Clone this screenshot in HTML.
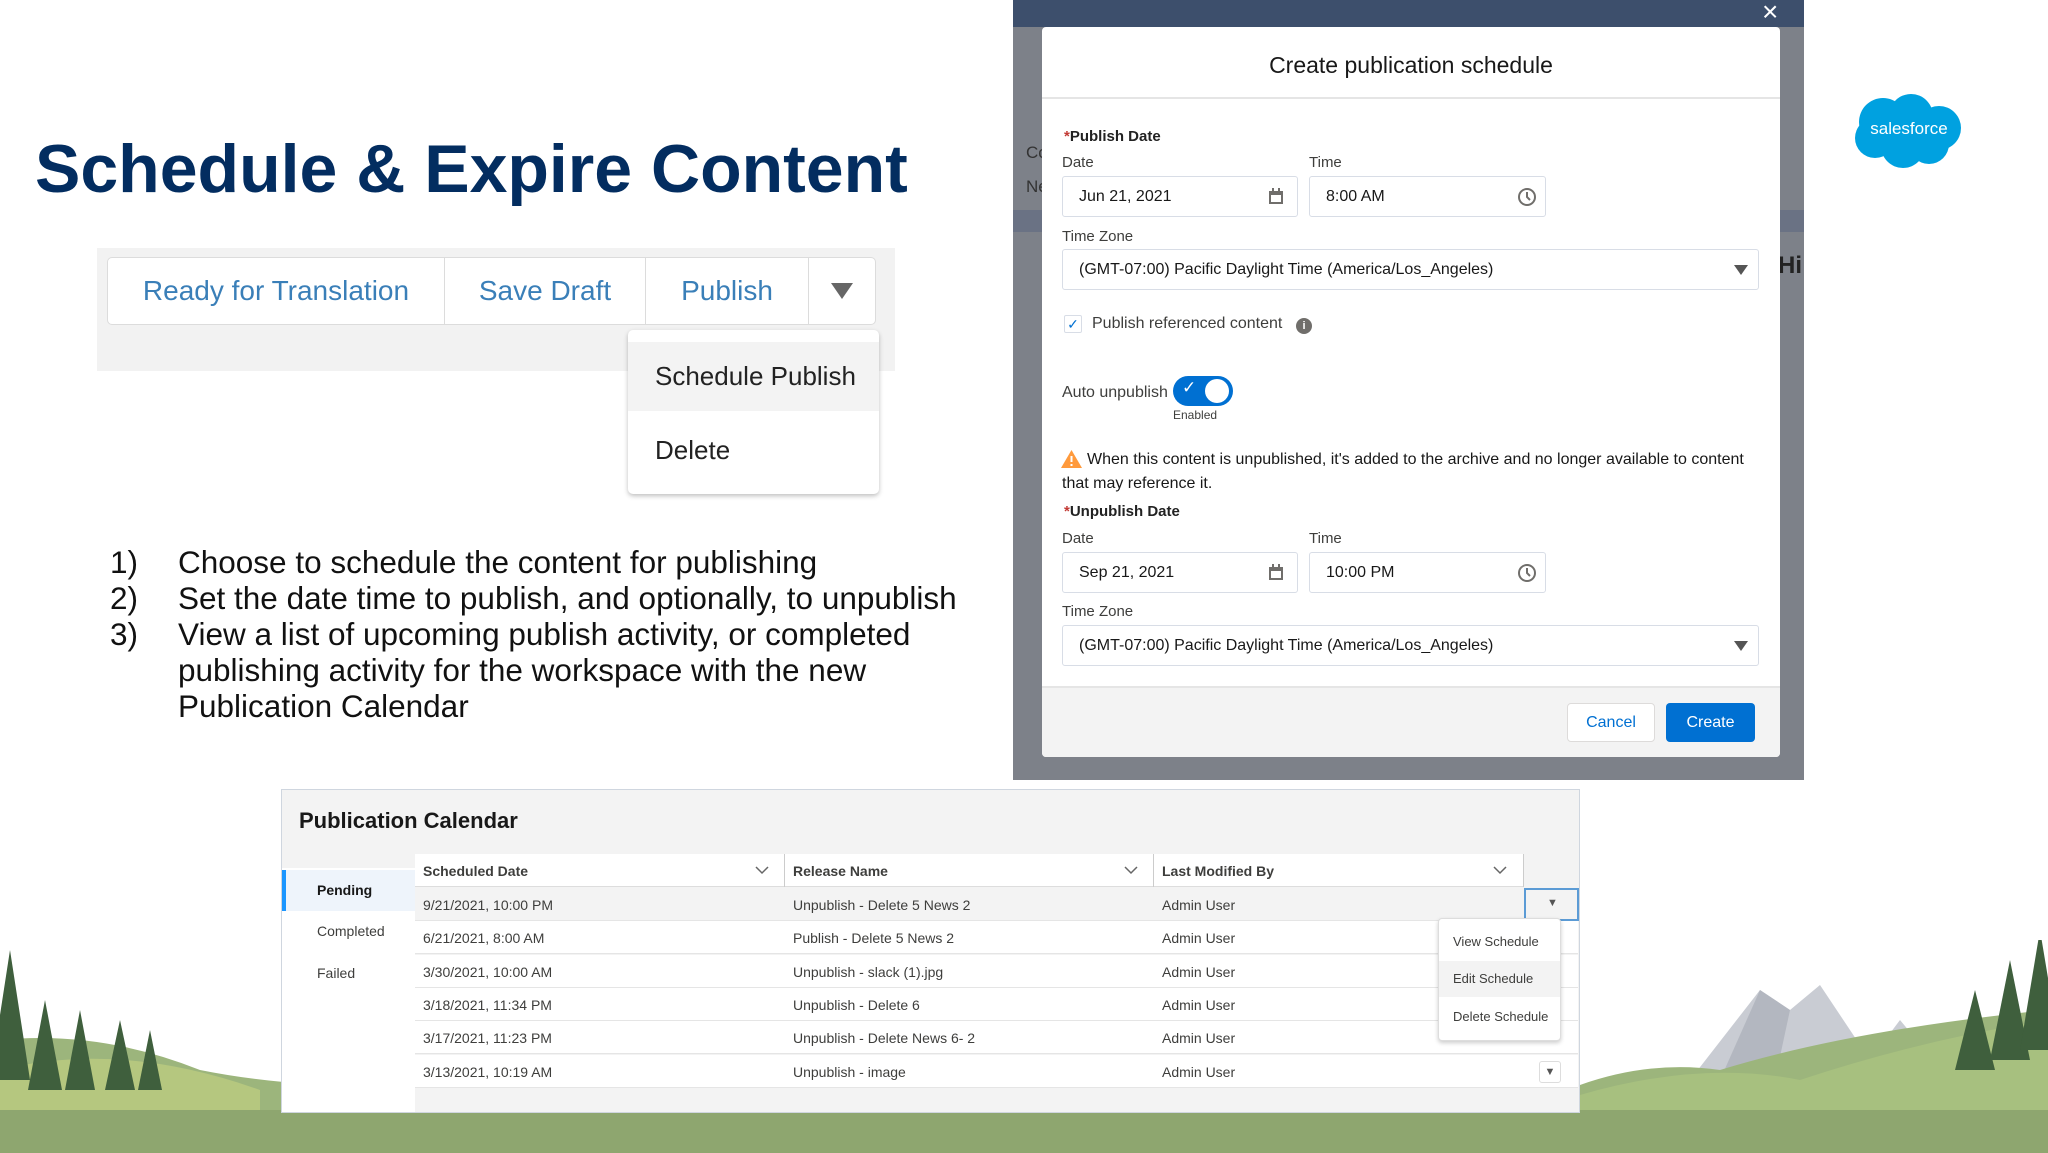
<!DOCTYPE html>
<html><head><meta charset="utf-8"><style>
*{margin:0;padding:0;box-sizing:border-box}
body{width:2048px;height:1153px;position:relative;overflow:hidden;background:#fff;font-family:"Liberation Sans",sans-serif;color:#181818}
.a{position:absolute}
.lbl{font-size:15px;color:#3e3e3c}
.inp{position:absolute;border:1px solid #d8dde6;border-radius:3px;background:#fff;font-size:16px;color:#181818;padding-left:16px;display:flex;align-items:center}
.row{position:absolute;left:415px;width:1163px;height:33px;border-bottom:1px solid #e5e5e5;font-size:14px;color:#3e3e3c}
.row span{position:absolute;top:9px}
</style></head><body>

<!-- landscape -->
<svg class="a" style="left:0;top:940px" width="2048" height="213" viewBox="0 940 2048 213">
<polygon points="1690,1080 1760,990 1790,1010 1820,985 1870,1060 1900,1020 1950,1080" fill="#c9ccd3"/>
<polygon points="1760,990 1790,1010 1775,1080 1720,1080" fill="#b3b7c0"/>
<path d="M0,1040 Q100,1030 200,1070 Q300,1090 420,1085 L1580,1085 Q1650,1060 1720,1070 Q1850,1030 2048,1010 L2048,1153 L0,1153Z" fill="#9cb57c"/>
<path d="M0,1070 Q120,1040 260,1090 L260,1153 L0,1153Z" fill="#b5c77f"/>
<path d="M1580,1095 Q1700,1060 1800,1080 Q1920,1040 2048,1020 L2048,1153 L1580,1153Z" fill="#a7c07f"/>
<rect x="0" y="1110" width="2048" height="43" fill="#8ea66f"/>
<g fill="#3f5f3d">
<polygon points="10,950 30,1080 -10,1080"/><polygon points="45,1000 62,1090 28,1090"/><polygon points="80,1010 95,1090 65,1090"/><polygon points="120,1020 135,1090 105,1090"/><polygon points="150,1030 162,1090 138,1090"/>
<polygon points="1975,990 1995,1070 1955,1070"/><polygon points="2010,960 2030,1060 1990,1060"/><polygon points="2040,930 2060,1050 2020,1050"/>
</g>
</svg>

<!-- Title -->
<div class="a" style="left:35px;top:130px;font-size:68px;font-weight:bold;color:#032d60;white-space:nowrap">Schedule &amp; Expire Content</div>

<!-- button bar -->
<div class="a" style="left:97px;top:248px;width:798px;height:123px;background:#f2f2f2"></div>
<div class="a" style="left:107px;top:257px;width:769px;height:68px;background:#fff;border:1px solid #dcdcdc;border-radius:5px;display:flex;font-size:28px;color:#3a7fb8">
<div style="width:337px;border-right:1px solid #dcdcdc;display:flex;align-items:center;justify-content:center">Ready for Translation</div>
<div style="width:201px;border-right:1px solid #dcdcdc;display:flex;align-items:center;justify-content:center">Save Draft</div>
<div style="width:163px;border-right:1px solid #dcdcdc;display:flex;align-items:center;justify-content:center">Publish</div>
<div style="flex:1;display:flex;align-items:center;justify-content:center"><svg width="22" height="16"><polygon points="0,0 22,0 11,16" fill="#666"/></svg></div>
</div>
<div class="a" style="left:628px;top:330px;width:251px;height:164px;background:#fff;border-radius:5px;box-shadow:0 2px 5px rgba(0,0,0,.25);font-size:26px;color:#222">
<div style="position:absolute;top:12px;left:0;right:0;height:69px;background:#f3f3f3"></div>
<div style="position:absolute;left:27px;top:31px">Schedule Publish</div>
<div style="position:absolute;left:27px;top:105px">Delete</div>
</div>

<!-- list -->
<div class="a" style="left:110px;top:544px;font-size:31.5px;line-height:36px;color:#111">
<div>1)</div><div>2)</div><div>3)</div></div>
<div class="a" style="left:178px;top:544px;font-size:31.5px;line-height:36px;color:#111;width:800px">
<div>Choose to schedule the content for publishing</div>
<div style="white-space:nowrap">Set the date time to publish, and optionally, to unpublish</div>
<div>View a list of upcoming publish activity, or completed publishing activity for the workspace with the new Publication Calendar</div></div>

<!-- modal backdrop -->
<div class="a" style="left:1013px;top:0;width:791px;height:780px;background:#7d8189"></div>
<div class="a" style="left:1013px;top:0;width:791px;height:27px;background:#3d4f6c"></div>
<div class="a" style="left:1013px;top:210px;width:791px;height:22px;background:#6a7284"></div>
<div class="a" style="left:1026px;top:136px;font-size:17px;color:#333;line-height:34px">Co<br>Ne</div>
<div class="a" style="left:1778px;top:252px;font-size:24px;font-weight:bold;color:#222">Hi</div>
<div class="a" style="left:1762px;top:-4px;font-size:28px;color:#fff">×</div>

<div class="a" style="left:1042px;top:27px;width:738px;height:730px;background:#fff;border-radius:4px;overflow:hidden">
<div style="height:72px;border-bottom:2px solid #e5e5e5;text-align:center;font-size:23px;line-height:76px;color:#181818">Create publication schedule</div>
<div style="position:absolute;left:0;right:0;bottom:0;height:71px;background:#f3f3f3;border-top:2px solid #e5e5e5"></div>
</div>
<div class="a" style="left:1064px;top:128px;font-size:15px;font-weight:bold;color:#222"><span style="color:#c23934">*</span>Publish Date</div>
<div class="a lbl" style="left:1062px;top:154px">Date</div>
<div class="a lbl" style="left:1309px;top:154px">Time</div>
<div class="inp" style="left:1062px;top:176px;width:236px;height:41px">Jun 21, 2021</div>
<div class="inp" style="left:1309px;top:176px;width:237px;height:41px">8:00 AM</div>
<div class="a lbl" style="left:1062px;top:228px">Time Zone</div>
<div class="inp" style="left:1062px;top:249px;width:697px;height:41px">(GMT-07:00) Pacific Daylight Time (America/Los_Angeles)</div>
<div class="a" style="left:1064px;top:315px;width:18px;height:18px;border:1px solid #d8dde6;border-radius:2px;color:#0070d2;font-size:14px;text-align:center;line-height:16px">✓</div>
<div class="a" style="left:1092px;top:315px;font-size:16px;color:#3e3e3c">Publish referenced content</div>
<div class="a" style="left:1296px;top:318px;width:16px;height:16px;border-radius:50%;background:#706e6b;color:#fff;font-size:11px;font-weight:bold;text-align:center;line-height:16px">i</div>
<div class="a lbl" style="left:1062px;top:384px;font-size:16px">Auto unpublish</div>
<div class="a" style="left:1173px;top:376px;width:60px;height:30px;border-radius:15px;background:#0070d2"></div>
<div class="a" style="left:1205px;top:379px;width:24px;height:24px;border-radius:50%;background:#fff"></div>
<div class="a" style="left:1182px;top:378px;color:#fff;font-size:17px">✓</div>
<div class="a" style="left:1173px;top:408px;font-size:12px;color:#3e3e3c">Enabled</div>
<svg class="a" style="left:1061px;top:450px" width="21" height="18"><polygon points="10.5,0 21,18 0,18" fill="#ff9a3c"/><rect x="9.5" y="6" width="2" height="6" fill="#fff"/><rect x="9.5" y="14" width="2" height="2" fill="#fff"/></svg>
<div class="a" style="left:1062px;top:448px;width:700px;font-size:16px;line-height:24px;color:#181818;text-indent:25px">When this content is unpublished, it's added to the archive and no longer available to content that may reference it.</div>
<div class="a" style="left:1064px;top:503px;font-size:15px;font-weight:bold;color:#222"><span style="color:#c23934">*</span>Unpublish Date</div>
<div class="a lbl" style="left:1062px;top:530px">Date</div>
<div class="a lbl" style="left:1309px;top:530px">Time</div>
<div class="inp" style="left:1062px;top:552px;width:236px;height:41px">Sep 21, 2021</div>
<div class="inp" style="left:1309px;top:552px;width:237px;height:41px">10:00 PM</div>
<div class="a lbl" style="left:1062px;top:603px">Time Zone</div>
<div class="inp" style="left:1062px;top:625px;width:697px;height:41px">(GMT-07:00) Pacific Daylight Time (America/Los_Angeles)</div>
<svg class="a" style="left:1268px;top:188px" width="16" height="17"><rect x="1" y="3" width="14" height="13" fill="#706e6b"/><rect x="3" y="7" width="10" height="7" fill="#fff"/><rect x="4" y="0" width="2" height="5" fill="#706e6b"/><rect x="10" y="0" width="2" height="5" fill="#706e6b"/></svg>
<svg class="a" style="left:1268px;top:564px" width="16" height="17"><rect x="1" y="3" width="14" height="13" fill="#706e6b"/><rect x="3" y="7" width="10" height="7" fill="#fff"/><rect x="4" y="0" width="2" height="5" fill="#706e6b"/><rect x="10" y="0" width="2" height="5" fill="#706e6b"/></svg>
<svg class="a" style="left:1517px;top:187px" width="20" height="20"><circle cx="10" cy="10" r="8" fill="none" stroke="#706e6b" stroke-width="2"/><path d="M10 5 V10 L13 13" fill="none" stroke="#706e6b" stroke-width="2"/></svg>
<svg class="a" style="left:1517px;top:563px" width="20" height="20"><circle cx="10" cy="10" r="8" fill="none" stroke="#706e6b" stroke-width="2"/><path d="M10 5 V10 L13 13" fill="none" stroke="#706e6b" stroke-width="2"/></svg>
<svg class="a" style="left:1734px;top:265px" width="14" height="10"><polygon points="0,0 14,0 7,10" fill="#555"/></svg>
<svg class="a" style="left:1734px;top:641px" width="14" height="10"><polygon points="0,0 14,0 7,10" fill="#555"/></svg>
<div class="a" style="left:1567px;top:703px;width:88px;height:39px;border:1px solid #dddbda;border-radius:4px;background:#fff;color:#0070d2;font-size:16px;text-align:center;line-height:37px">Cancel</div>
<div class="a" style="left:1666px;top:703px;width:89px;height:39px;border-radius:4px;background:#0070d2;color:#fff;font-size:16px;text-align:center;line-height:39px">Create</div>

<!-- salesforce logo -->
<svg class="a" style="left:1853px;top:92px" width="112" height="80" viewBox="0 0 112 80">
<g fill="#00a1e0"><circle cx="30" cy="30" r="24"/><circle cx="58" cy="24" r="22"/><circle cx="86" cy="36" r="22"/><circle cx="22" cy="46" r="20"/><circle cx="50" cy="54" r="22"/><circle cx="76" cy="52" r="20"/></g>
<text x="56" y="42" text-anchor="middle" font-family="Liberation Sans" font-size="17" fill="#fff">salesforce</text></svg>

<!-- publication calendar -->
<div class="a" style="left:281px;top:789px;width:1299px;height:324px;background:#f3f3f3;border:1px solid #cfd6df"></div>
<div class="a" style="left:299px;top:808px;font-size:22px;font-weight:bold;color:#181818">Publication Calendar</div>
<div class="a" style="left:282px;top:868px;width:133px;height:244px;background:#fff"></div>
<div class="a" style="left:282px;top:870px;width:133px;height:41px;background:#eef4fb;border-left:4px solid #1b96ff"></div>
<div class="a" style="left:317px;top:882px;font-size:14px;font-weight:bold">Pending</div>
<div class="a" style="left:317px;top:923px;font-size:14px;color:#3e3e3c">Completed</div>
<div class="a" style="left:317px;top:965px;font-size:14px;color:#3e3e3c">Failed</div>
<div class="a" style="left:415px;top:854px;width:1109px;height:33px;background:#fff;border-bottom:1px solid #ddd;font-size:14px;font-weight:bold;color:#3e3e3c">
<div style="position:absolute;left:8px;top:9px">Scheduled Date</div>
<div style="position:absolute;left:369px;top:0;height:33px;border-left:1px solid #ccc"></div>
<div style="position:absolute;left:378px;top:9px">Release Name</div>
<div style="position:absolute;left:738px;top:0;height:33px;border-left:1px solid #ccc"></div>
<div style="position:absolute;left:747px;top:9px">Last Modified By</div>
<div style="position:absolute;left:1108px;top:0;height:33px;border-left:1px solid #ccc"></div>
<svg style="position:absolute;left:340px;top:12px" width="14" height="9"><path d="M1 1 L7 7 L13 1" fill="none" stroke="#666" stroke-width="1.5"/></svg>
<svg style="position:absolute;left:709px;top:12px" width="14" height="9"><path d="M1 1 L7 7 L13 1" fill="none" stroke="#666" stroke-width="1.5"/></svg>
<svg style="position:absolute;left:1078px;top:12px" width="14" height="9"><path d="M1 1 L7 7 L13 1" fill="none" stroke="#666" stroke-width="1.5"/></svg>
</div>
<div class="row" style="top:888px;background:#f3f3f3"><span style="left:8px">9/21/2021, 10:00 PM</span><span style="left:378px">Unpublish - Delete 5 News 2</span><span style="left:747px">Admin User</span></div>
<div class="a" style="left:1524px;top:888px;width:55px;height:33px;border:2px solid #5b9bd5;background:#f3f3f3"><span style="position:absolute;left:21px;top:7px;font-size:11px;color:#555">▼</span></div>
<div class="row" style="top:921px;background:#fff"><span style="left:8px">6/21/2021, 8:00 AM</span><span style="left:378px">Publish - Delete 5 News 2</span><span style="left:747px">Admin User</span></div>
<div class="row" style="top:955px;background:#fff"><span style="left:8px">3/30/2021, 10:00 AM</span><span style="left:378px">Unpublish - slack (1).jpg</span><span style="left:747px">Admin User</span></div>
<div class="row" style="top:988px;background:#fff"><span style="left:8px">3/18/2021, 11:34 PM</span><span style="left:378px">Unpublish - Delete 6</span><span style="left:747px">Admin User</span></div>
<div class="row" style="top:1021px;background:#fff"><span style="left:8px">3/17/2021, 11:23 PM</span><span style="left:378px">Unpublish - Delete News 6- 2</span><span style="left:747px">Admin User</span></div>
<div class="row" style="top:1055px;background:#fff"><span style="left:8px">3/13/2021, 10:19 AM</span><span style="left:378px">Unpublish - image</span><span style="left:747px">Admin User</span></div>
<div class="a" style="left:1539px;top:1061px;width:22px;height:22px;border:1px solid #ddd;border-radius:3px;background:#fff;font-size:11px;color:#555;text-align:center;line-height:20px">▼</div>
<div class="a" style="left:1438px;top:918px;width:123px;height:123px;background:#fff;border:1px solid #ddd;border-radius:4px;box-shadow:0 2px 4px rgba(0,0,0,.2);font-size:13px;color:#3e3e3c">
<div style="position:absolute;left:0;right:0;top:42px;height:36px;background:#f3f3f3"></div>
<div style="position:absolute;left:14px;top:15px">View Schedule</div>
<div style="position:absolute;left:14px;top:52px">Edit Schedule</div>
<div style="position:absolute;left:14px;top:90px">Delete Schedule</div>
</div>
</body></html>
